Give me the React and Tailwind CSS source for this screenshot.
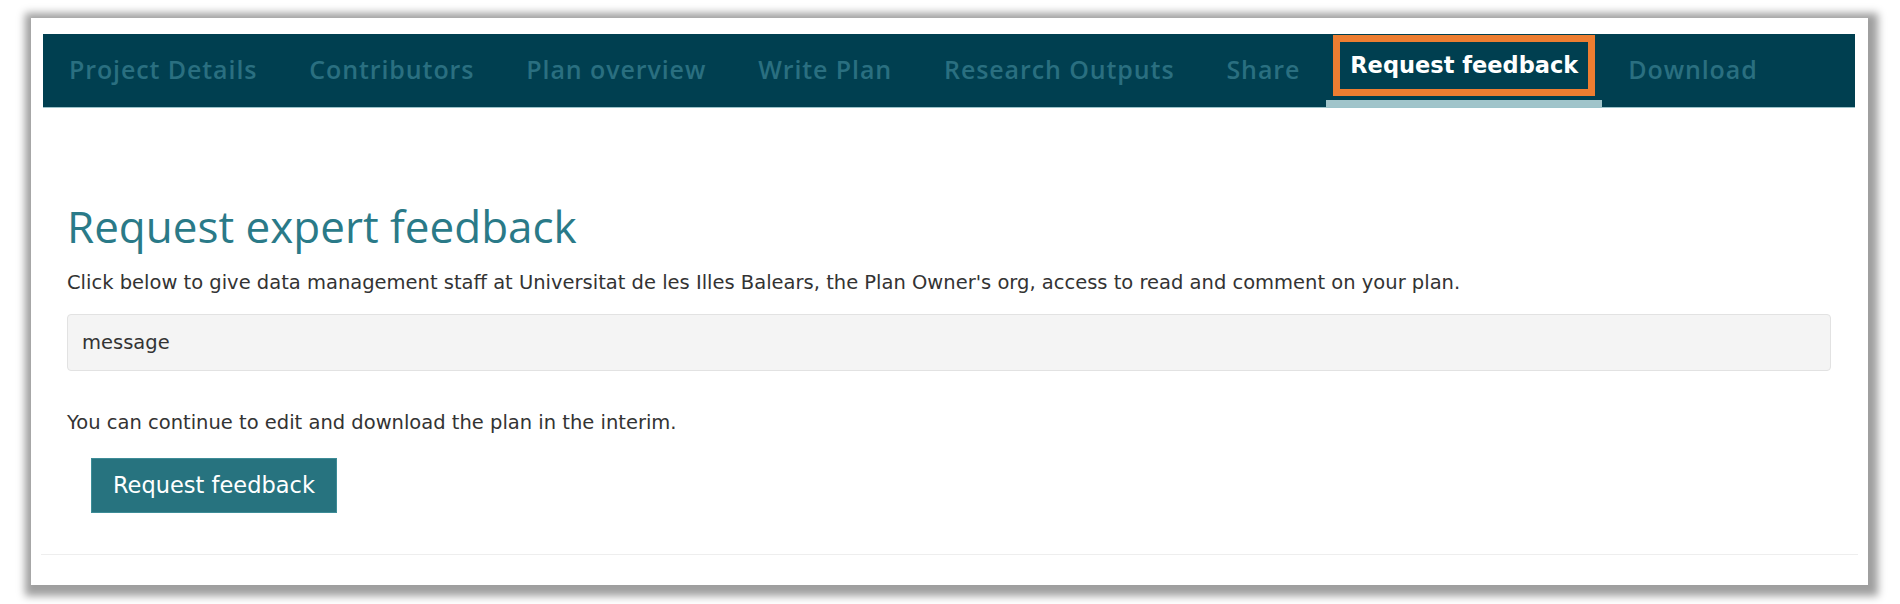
import React from "react";

const tabs = [
  "Project Details",
  "Contributors",
  "Plan overview",
  "Write Plan",
  "Research Outputs",
  "Share",
  "Request feedback",
  "Download",
];

function App() {
  return (
    <div className="w-[1900px] h-[604px] bg-white overflow-hidden pt-[18px] pl-[31px]">
      <div className="w-[1837px] h-[567px] bg-white flex flex-col shadow-[2px_3px_8px_8px_rgba(0,0,0,0.38)]">
        {/* tab bar */}
        <nav className="ml-[12px] mr-[13px] mt-[16px] h-[74px] bg-[#003f50] border-b border-[#9cc3ca] flex">
          {tabs.map((tab) =>
            tab === "Request feedback" ? (
              <div
                key={tab}
                className="px-[7px] pt-px border-b-[7px] border-[#a0c4ca] flex flex-col"
              >
                <div className="h-[61px] border-[7px] border-[#ed7d31] flex items-center px-[10px] text-white font-['DejaVu_Sans',sans-serif] font-bold text-[22.5px]">
                  {tab}
                </div>
              </div>
            ) : (
              <div
                key={tab}
                className="px-[26px] flex items-center pb-[1px] text-[#2a6f80] font-['Open_Sans',sans-serif] font-semibold text-[25px] tracking-[0.9px]"
              >
                {tab}
              </div>
            )
          )}
        </nav>

        {/* page body */}
        <div className="px-[36px] font-['DejaVu_Sans',sans-serif] text-[#333333]">
          <h1 className="mt-[96px] text-[44px] leading-none font-normal text-[#2a7a88] font-['Open_Sans',sans-serif]">
            Request expert feedback
          </h1>
          <p className="mt-[21px] text-[19.5px] leading-[28px]">
            Click below to give data management staff at Universitat de les Illes Balears, the Plan Owner's org, access to read and comment on your plan.
          </p>
          <div className="mt-[17px] h-[57px] mr-[1px] bg-[#f4f4f4] border border-[#e2e2e2] rounded-[4px] flex items-center px-[14px] text-[19.5px]">
            message
          </div>
          <p className="mt-[38px] text-[19.5px] leading-[28px]">
            You can continue to edit and download the plan in the interim.
          </p>
          <button className="mt-[21px] ml-[24px] h-[55px] px-[21px] bg-[#27737f] text-white text-[22.5px] border border-[#3d8c97]">
            Request feedback
          </button>
        </div>

        <div className="mt-auto mb-[30px] mx-[10px] border-t border-[#eeeeee]" />
      </div>
    </div>
  );
}

export default App;
